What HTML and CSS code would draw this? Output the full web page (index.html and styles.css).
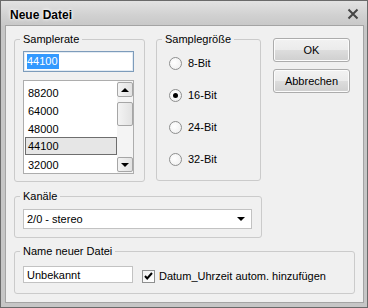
FILE: index.html
```html
<!DOCTYPE html>
<html>
<head>
<meta charset="utf-8">
<link rel="stylesheet" href="styles.css">
</head>
<body>
<div class="window">
  <div class="titlebar">
    <span class="title">Neue Datei</span>
    <svg class="close" width="12" height="12" viewBox="0 0 12 12"><path d="M1.5 1.5 L10.5 10.5 M10.5 1.5 L1.5 10.5" stroke="#454545" stroke-width="2" fill="none"/></svg>
  </div>
  <div class="frame-body">
    <div class="client">
      <div class="top-row">
        <fieldset class="group g-rate">
          <legend>Samplerate</legend>
          <div class="inner">
            <div class="textbox focus"><span class="sel">44100</span></div>
            <div class="listbox">
              <ul class="items">
                <li>88200</li>
                <li>64000</li>
                <li>48000</li>
                <li class="current">44100</li>
                <li>32000</li>
              </ul>
              <div class="scrollbar">
                <div class="sb-btn"><span class="tri up"></span></div>
                <div class="sb-track"><div class="sb-thumb"></div></div>
                <div class="sb-btn"><span class="tri down"></span></div>
              </div>
            </div>
          </div>
        </fieldset>
        <fieldset class="group g-size">
          <legend>Samplegröße</legend>
          <div class="radios">
            <label class="radio"><span class="rb"></span>8-Bit</label>
            <label class="radio"><span class="rb checked"></span>16-Bit</label>
            <label class="radio"><span class="rb"></span>24-Bit</label>
            <label class="radio"><span class="rb"></span>32-Bit</label>
          </div>
        </fieldset>
        <div class="buttons">
          <div class="btn">OK</div>
          <div class="btn">Abbrechen</div>
        </div>
      </div>
      <fieldset class="group g-chan">
        <legend>Kanäle</legend>
        <div class="inner">
          <div class="combo"><span>2/0 - stereo</span><span class="tri down"></span></div>
        </div>
      </fieldset>
      <fieldset class="group g-name">
        <legend>Name neuer Datei</legend>
        <div class="inner name-row">
          <div class="textbox name">Unbekannt</div>
          <label class="check"><span class="cb"><svg width="11" height="11" viewBox="0 0 11 11"><path d="M2 5 L4.2 7.5 L9 2" stroke="#000" stroke-width="2" fill="none"/></svg></span>Datum_Uhrzeit autom. hinzufügen</label>
        </div>
      </fieldset>
    </div>
  </div>
</div>
</body>
</html>
```
FILE: styles.css
```css
html, body {
  margin: 0;
  padding: 0;
}
body {
  font-family: "Liberation Sans", Arial, sans-serif;
  font-size: 11px;
  color: #000;
  background: #fff;
}
.window {
  width: 368px;
  height: 308px;
  box-sizing: border-box;
  border: 1px solid #6a6a6a;
  background: #c6c6c6;
  display: flex;
  flex-direction: column;
}
.titlebar {
  height: 25px;
  flex: none;
  display: flex;
  align-items: center;
  justify-content: space-between;
  padding: 2px 8px 0 9px;
  box-sizing: border-box;
  background: linear-gradient(#e2e2e2, #d0d0d0 60%, #c8c8c8);
}
.title {
  font-weight: bold;
  font-size: 12px;
  text-shadow: 0 0 4px #fff, 0 0 2px #fff;
}
.close {
  margin-top: -1px;
}
.frame-body {
  flex: 1;
  padding: 0 5px 5px 5px;
  display: flex;
}
.client {
  flex: 1;
  background: #f0f0f0;
  box-shadow: 0 0 0 1px #a4a4a4;
  padding: 7px 8px 0 8px;
  box-sizing: border-box;
}
.group {
  margin: 0;
  border: 1px solid #cbcbcb;
  border-radius: 3px;
  min-width: 0;
  box-sizing: border-box;
  text-align: left;
}
.group legend {
  padding: 0 3px;
  margin: 0 auto 0 5px;
  line-height: 13px;
  font-size: 11px;
  text-align: left;
}
.inner {
  padding-left: 8px;
}
.top-row {
  display: flex;
  align-items: flex-start;
}
.g-rate {
  width: 131px;
  padding: 5px 0 7px 0;
}
.textbox {
  background: #fff;
  border: 1px solid #b5b5b5;
  box-sizing: border-box;
  padding-left: 3px;
  display: flex;
  align-items: center;
}
.textbox.focus {
  width: 111px;
  height: 21px;
  border-color: #7d9cbb;
  box-shadow: inset 0 0 0 1px #e3ebf3;
}
.sel {
  background: #3399ff;
  color: #fff;
  padding: 1px 1px 1px 0;
  line-height: 13px;
}
.listbox {
  margin-top: 8px;
  width: 111px;
  height: 94px;
  box-sizing: border-box;
  border: 1px solid #adadad;
  background: #fff;
  display: flex;
}
.items {
  list-style: none;
  margin: 0;
  padding: 2px 0 0 1px;
  flex: 1;
}
.items li {
  height: 18px;
  line-height: 18px;
  padding-left: 2px;
  box-sizing: border-box;
  border: 1px solid transparent;
}
.items li.current {
  background: #e6e6e6;
  border-color: #6e6e6e;
  line-height: 16px;
}
.scrollbar {
  width: 16px;
  display: flex;
  flex-direction: column;
  padding: 1px 0;
  background: #f4f4f4;
}
.sb-btn {
  height: 15px;
  flex: none;
  box-sizing: border-box;
  border: 1px solid #a6a6a6;
  border-radius: 2px;
  background: linear-gradient(90deg, #f3f3f3, #e2e2e2);
  display: flex;
  align-items: center;
  justify-content: center;
}
.sb-track {
  flex: 1;
  padding-top: 5px;
}
.sb-thumb {
  height: 24px;
  box-sizing: border-box;
  border: 1px solid #a6a6a6;
  border-radius: 2px;
  background: linear-gradient(90deg, #f3f3f3, #e2e2e2);
}
.tri {
  width: 0;
  height: 0;
  border-left: 4px solid transparent;
  border-right: 4px solid transparent;
}
.tri.up {
  border-bottom: 4px solid #000;
}
.tri.down {
  border-top: 4px solid #000;
}
.g-size {
  width: 105px;
  margin-left: 11px;
  padding: 9px 0 0 0;
  height: 148px;
}
.radios {
  display: flex;
  flex-direction: column;
  gap: 16px;
  padding-left: 12px;
}
.radio {
  display: flex;
  align-items: center;
  height: 16px;
}
.rb {
  width: 13px;
  height: 13px;
  box-sizing: border-box;
  border: 1px solid #8e8f8f;
  border-radius: 50%;
  background: radial-gradient(circle at 40% 40%, #fff, #ececec);
  margin-right: 6px;
  display: flex;
  align-items: center;
  justify-content: center;
}
.rb.checked::after {
  content: "";
  width: 5px;
  height: 5px;
  border-radius: 50%;
  background: #000;
}
.buttons {
  margin-left: 12px;
  margin-top: 5px;
  display: flex;
  flex-direction: column;
  gap: 7px;
}
.btn {
  width: 77px;
  height: 24px;
  box-sizing: border-box;
  border: 1px solid #acacac;
  border-radius: 3px;
  background: linear-gradient(#f2f2f2, #ebebeb 50%, #dddddd 51%, #cfcfcf);
  box-shadow: inset 0 0 0 1px #fcfcfc;
  display: flex;
  align-items: center;
  justify-content: center;
}
.g-chan {
  width: 248px;
  margin-top: 8px;
  padding: 6px 0 8px 0;
}
.combo {
  width: 229px;
  height: 20px;
  box-sizing: border-box;
  border: 1px solid #c2c2c2;
  background: #fff;
  display: flex;
  align-items: center;
  justify-content: space-between;
  padding: 0 6px 0 3px;
}
.g-name {
  width: 341px;
  margin-top: 7px;
  padding: 8px 0 10px 0;
}
.name-row {
  display: flex;
  align-items: center;
}
.textbox.name {
  width: 110px;
  height: 17px;
  border-color: #c2c2c2;
}
.check {
  display: flex;
  align-items: center;
  margin-left: 9px;
  margin-top: 3px;
}
.cb {
  width: 13px;
  height: 13px;
  box-sizing: border-box;
  border: 1px solid #8e8f8f;
  background: linear-gradient(135deg, #f0f0f0, #fff);
  margin-right: 4px;
  display: flex;
  align-items: center;
  justify-content: center;
}
```
